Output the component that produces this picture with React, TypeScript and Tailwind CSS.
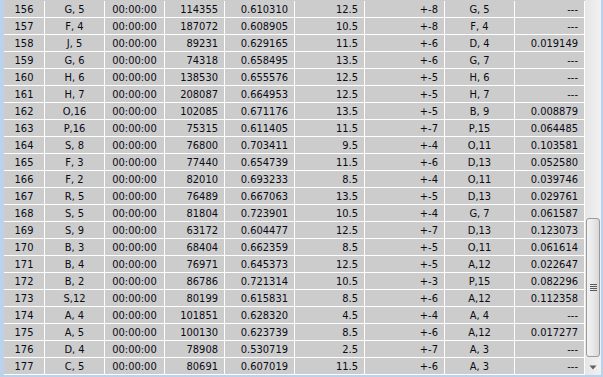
import React from "react";

type Row = [string, string, string, string, string, string, string, string, string];

const rows: Row[] = [
	["156", "G, 5", "00:00:00", "114355", "0.610310", "12.5", "+-8", "G, 5", "---"],
	["157", "F, 4", "00:00:00", "187072", "0.608905", "10.5", "+-8", "F, 4", "---"],
	["158", "J, 5", "00:00:00", "89231", "0.629165", "11.5", "+-6", "D, 4", "0.019149"],
	["159", "G, 6", "00:00:00", "74318", "0.658495", "13.5", "+-6", "G, 7", "---"],
	["160", "H, 6", "00:00:00", "138530", "0.655576", "12.5", "+-5", "H, 6", "---"],
	["161", "H, 7", "00:00:00", "208087", "0.664953", "12.5", "+-5", "H, 7", "---"],
	["162", "O,16", "00:00:00", "102085", "0.671176", "13.5", "+-5", "B, 9", "0.008879"],
	["163", "P,16", "00:00:00", "75315", "0.611405", "11.5", "+-7", "P,15", "0.064485"],
	["164", "S, 8", "00:00:00", "76800", "0.703411", "9.5", "+-4", "O,11", "0.103581"],
	["165", "F, 3", "00:00:00", "77440", "0.654739", "11.5", "+-6", "D,13", "0.052580"],
	["166", "F, 2", "00:00:00", "82010", "0.693233", "8.5", "+-4", "O,11", "0.039746"],
	["167", "R, 5", "00:00:00", "76489", "0.667063", "13.5", "+-5", "D,13", "0.029761"],
	["168", "S, 5", "00:00:00", "81804", "0.723901", "10.5", "+-4", "G, 7", "0.061587"],
	["169", "S, 9", "00:00:00", "63172", "0.604477", "12.5", "+-7", "D,13", "0.123073"],
	["170", "B, 3", "00:00:00", "68404", "0.662359", "8.5", "+-5", "O,11", "0.061614"],
	["171", "B, 4", "00:00:00", "76971", "0.645373", "12.5", "+-5", "A,12", "0.022647"],
	["172", "B, 2", "00:00:00", "86786", "0.721314", "10.5", "+-3", "P,15", "0.082296"],
	["173", "S,12", "00:00:00", "80199", "0.615831", "8.5", "+-6", "A,12", "0.112358"],
	["174", "A, 4", "00:00:00", "101851", "0.628320", "4.5", "+-4", "A, 4", "---"],
	["175", "A, 5", "00:00:00", "100130", "0.623739", "8.5", "+-6", "A,12", "0.017277"],
	["176", "D, 4", "00:00:00", "78908", "0.530719", "2.5", "+-7", "A, 3", "---"],
	["177", "C, 5", "00:00:00", "80691", "0.607019", "11.5", "+-6", "A, 3", "---"],
];

// centered text columns vs right-aligned numbers
const align = [
	"text-center",
	"text-center",
	"text-center",
	"text-right pr-[6px]",
	"text-right pr-[6px]",
	"text-right pr-[6px]",
	"text-right pr-[6px]",
	"text-center",
	"text-right pr-[6px]",
];

function Scrollbar() {
	return (
		<div className="relative w-[16px] h-full bg-gradient-to-r from-[#e6e6e6] to-[#f1f1f1]">
			{/* thumb */}
			<div className="absolute left-[1px] right-[1px] top-[218px] h-[139px] rounded-[3px] border border-[#9a9a9a] bg-gradient-to-r from-[#f2f2f2] via-[#e9e9e9] to-[#d8d8d8] flex items-center justify-center">
				<div className="flex flex-col gap-[1px]">
					{[0, 1, 2, 3].map((i) => (
						<div key={i} className="w-[7px] h-[1px] bg-[#5a5a5a]" />
					))}
				</div>
			</div>
			{/* down arrow */}
			<svg
				className="absolute left-[4px] top-[365px]"
				width="8"
				height="5"
				viewBox="0 0 8 5"
			>
				<path d="M0.5 0.5 H7.5 L4 4.5 Z" fill="#5f5f5f" />
			</svg>
		</div>
	);
}

export default function App() {
	return (
		<div
			className="w-[603px] h-[377px] overflow-hidden bg-[#bad2ec] flex pl-[4px]"
			style={{ fontFamily: "'DejaVu Sans Condensed', 'Liberation Sans', sans-serif" }}
		>
			<div className="flex h-[375px]">
				<div className="w-[581px] h-full pt-px bg-[#cccccc] text-[11px] text-[#0a0a14]">
					{rows.map((r) => (
						<div
							key={r[0]}
							className="grid grid-cols-[41px_60px_60px_60px_70px_70px_80px_70px_70px] h-[17px] border-b border-white"
						>
							{r.map((cell, i) => (
								<div
									key={i}
									className={`border-r border-white h-[16px] leading-[17px] whitespace-pre overflow-hidden ${align[i]}`}
								>
									{cell}
								</div>
							))}
						</div>
					))}
				</div>
				<Scrollbar />
			</div>
		</div>
	);
}
